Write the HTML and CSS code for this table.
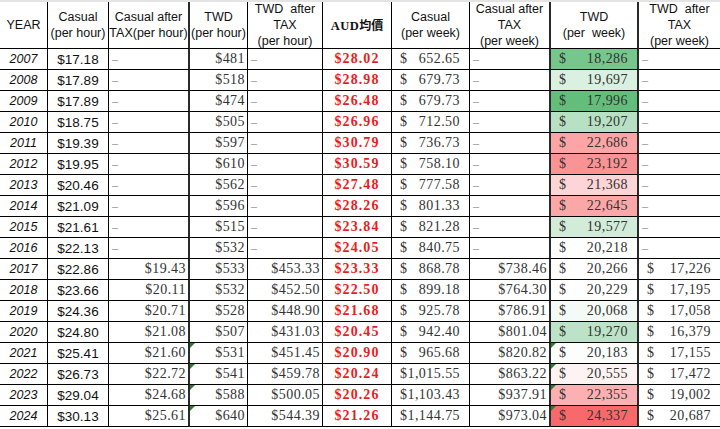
FILE: index.html
```html
<!DOCTYPE html>
<html lang="zh-Hant">
<head>
<meta charset="utf-8">
<title>Casual vs TWD</title>
<link rel="stylesheet" href="styles.css">
</head>
<body>
<div class="sheet">
  <div class="h">YEAR</div>
  <div class="h"><span>Casual</span><span>(per hour)</span></div>
  <div class="h"><span>Casual after</span><span>TAX(per hour)</span></div>
  <div class="h"><span>TWD</span><span>(per hour)</span></div>
  <div class="h"><span>TWD&nbsp; after</span><span>TAX</span><span>(per hour)</span></div>
  <div class="h aud-h"><span><b class="lat">AUD</b><b class="cjk">均價</b></span></div>
  <div class="h"><span>Casual</span><span>(per week)</span></div>
  <div class="h"><span>Casual after</span><span>TAX</span><span>(per week)</span></div>
  <div class="h"><span>TWD</span><span>(per&nbsp; week)</span></div>
  <div class="h"><span>TWD&nbsp; after</span><span>TAX</span><span>(per week)</span></div>

  <div class="yr">2007</div><div class="cas">$17.18</div><div class="dash">–</div><div class="num">$481</div><div class="dash">–</div><div class="aud">$28.02</div><div class="acc"><span>$</span><span>652.65</span></div><div class="dash">–</div><div class="acc" style="background:rgb(119,198,140)"><span>$</span><span>18,286</span></div><div class="dash">–</div>
  <div class="yr">2008</div><div class="cas">$17.89</div><div class="dash">–</div><div class="num">$518</div><div class="dash">–</div><div class="aud">$28.98</div><div class="acc"><span>$</span><span>679.73</span></div><div class="dash">–</div><div class="acc" style="background:rgb(218,240,224)"><span>$</span><span>19,697</span></div><div class="dash">–</div>
  <div class="yr">2009</div><div class="cas">$17.89</div><div class="dash">–</div><div class="num">$474</div><div class="dash">–</div><div class="aud">$26.48</div><div class="acc"><span>$</span><span>679.73</span></div><div class="dash">–</div><div class="acc" style="background:rgb(99,190,123)"><span>$</span><span>17,996</span></div><div class="dash">–</div>
  <div class="yr">2010</div><div class="cas">$18.75</div><div class="dash">–</div><div class="num">$505</div><div class="dash">–</div><div class="aud">$26.96</div><div class="acc"><span>$</span><span>712.50</span></div><div class="dash">–</div><div class="acc" style="background:rgb(184,225,195)"><span>$</span><span>19,207</span></div><div class="dash">–</div>
  <div class="yr">2011</div><div class="cas">$19.39</div><div class="dash">–</div><div class="num">$597</div><div class="dash">–</div><div class="aud">$30.79</div><div class="acc"><span>$</span><span>736.73</span></div><div class="dash">–</div><div class="acc" style="background:rgb(251,165,166)"><span>$</span><span>22,686</span></div><div class="dash">–</div>
  <div class="yr">2012</div><div class="cas">$19.95</div><div class="dash">–</div><div class="num">$610</div><div class="dash">–</div><div class="aud">$30.59</div><div class="acc"><span>$</span><span>758.10</span></div><div class="dash">–</div><div class="acc" style="background:rgb(250,147,148)"><span>$</span><span>23,192</span></div><div class="dash">–</div>
  <div class="yr">2013</div><div class="cas">$20.46</div><div class="dash">–</div><div class="num">$562</div><div class="dash">–</div><div class="aud">$27.48</div><div class="acc"><span>$</span><span>777.58</span></div><div class="dash">–</div><div class="acc" style="background:rgb(253,213,214)"><span>$</span><span>21,368</span></div><div class="dash">–</div>
  <div class="yr">2014</div><div class="cas">$21.09</div><div class="dash">–</div><div class="num">$596</div><div class="dash">–</div><div class="aud">$28.26</div><div class="acc"><span>$</span><span>801.33</span></div><div class="dash">–</div><div class="acc" style="background:rgb(251,167,168)"><span>$</span><span>22,645</span></div><div class="dash">–</div>
  <div class="yr">2015</div><div class="cas">$21.61</div><div class="dash">–</div><div class="num">$515</div><div class="dash">–</div><div class="aud">$23.84</div><div class="acc"><span>$</span><span>821.28</span></div><div class="dash">–</div><div class="acc" style="background:rgb(210,236,217)"><span>$</span><span>19,577</span></div><div class="dash">–</div>
  <div class="yr">2016</div><div class="cas">$22.13</div><div class="dash">–</div><div class="num">$532</div><div class="dash">–</div><div class="aud">$24.05</div><div class="acc"><span>$</span><span>840.75</span></div><div class="dash">–</div><div class="acc" style="background:rgb(254,255,255)"><span>$</span><span>20,218</span></div><div class="dash">–</div>
  <div class="yr">2017</div><div class="cas">$22.86</div><div class="num">$19.43</div><div class="num">$533</div><div class="num">$453.33</div><div class="aud">$23.33</div><div class="acc"><span>$</span><span>868.78</span></div><div class="num">$738.46</div><div class="acc" style="background:rgb(255,253,253)"><span>$</span><span>20,266</span></div><div class="acc"><span>$</span><span>17,226</span></div>
  <div class="yr">2018</div><div class="cas">$23.66</div><div class="num">$20.11</div><div class="num">$532</div><div class="num">$452.50</div><div class="aud">$22.50</div><div class="acc"><span>$</span><span>899.18</span></div><div class="num">$764.30</div><div class="acc" style="background:rgb(255,255,255)"><span>$</span><span>20,229</span></div><div class="acc"><span>$</span><span>17,195</span></div>
  <div class="yr">2019</div><div class="cas">$24.36</div><div class="num">$20.71</div><div class="num">$528</div><div class="num">$448.90</div><div class="aud">$21.68</div><div class="acc"><span>$</span><span>925.78</span></div><div class="num">$786.91</div><div class="acc" style="background:rgb(244,250,246)"><span>$</span><span>20,068</span></div><div class="acc"><span>$</span><span>17,058</span></div>
  <div class="yr">2020</div><div class="cas">$24.80</div><div class="num">$21.08</div><div class="num">$507</div><div class="num">$431.03</div><div class="aud">$20.45</div><div class="acc"><span>$</span><span>942.40</span></div><div class="num">$801.04</div><div class="acc" style="background:rgb(188,227,199)"><span>$</span><span>19,270</span></div><div class="acc"><span>$</span><span>16,379</span></div>
  <div class="yr">2021</div><div class="cas">$25.41</div><div class="num">$21.60</div><div class="num mark">$531</div><div class="num">$451.45</div><div class="aud">$20.90</div><div class="acc"><span>$</span><span>965.68</span></div><div class="num">$820.82</div><div class="acc mark" style="background:rgb(252,254,253)"><span>$</span><span>20,183</span></div><div class="acc"><span>$</span><span>17,155</span></div>
  <div class="yr">2022</div><div class="cas">$26.73</div><div class="num">$22.72</div><div class="num mark">$541</div><div class="num">$459.78</div><div class="aud">$20.24</div><div class="acc"><span>$1,015.55</span></div><div class="num">$863.22</div><div class="acc mark" style="background:rgb(254,243,243)"><span>$</span><span>20,555</span></div><div class="acc"><span>$</span><span>17,472</span></div>
  <div class="yr">2023</div><div class="cas">$29.04</div><div class="num">$24.68</div><div class="num mark">$588</div><div class="num">$500.05</div><div class="aud">$20.26</div><div class="acc"><span>$1,103.43</span></div><div class="num">$937.91</div><div class="acc mark" style="background:rgb(251,177,178)"><span>$</span><span>22,355</span></div><div class="acc"><span>$</span><span>19,002</span></div>
  <div class="yr">2024</div><div class="cas">$30.13</div><div class="num">$25.61</div><div class="num mark">$640</div><div class="num">$544.39</div><div class="aud">$21.26</div><div class="acc"><span>$1,144.75</span></div><div class="num">$973.04</div><div class="acc mark" style="background:rgb(248,105,107)"><span>$</span><span>24,337</span></div><div class="acc"><span>$</span><span>20,687</span></div>
</div>
</body>
</html>
```
FILE: styles.css
```css
html, body {
  margin: 0;
  padding: 0;
  background: #ffffff;
}

.sheet {
  display: grid;
  grid-template-columns: 48px 61px 81px 58px 75px 69px 78px 81px 88px 81px;
  grid-template-rows: 47px repeat(18, 21px);
  width: 720px;
  border-top: 2px solid #e4e4e4;
  color: #222;
}

.sheet > div {
  box-sizing: border-box;
  position: relative;
  display: flex;
  align-items: center;
  min-width: 0;
  overflow: hidden;
  white-space: nowrap;
  border-right: 1px solid #000;
  border-bottom: 1px solid #000;
}

.sheet > div:nth-child(10n+3),
.sheet > div:nth-child(10n+8),
.sheet > div:nth-child(10n+9) {
  border-right: 2px solid #2a2a2a;
}

.sheet > div:nth-child(10n) {
  border-right: none;
}

.sheet .h {
  flex-direction: column;
  justify-content: center;
  font: 12.5px/16px "Liberation Sans", Arial, sans-serif;
  color: #111;
  text-align: center;
}

.aud-h .lat {
  font: bold 12.5px "Liberation Serif", serif;
  letter-spacing: 0.5px;
}

.aud-h .cjk {
  font: bold 12px "Noto Sans CJK TC", "Noto Sans CJK SC", sans-serif;
}

.sheet .yr {
  justify-content: center;
  font: italic 12.5px "Liberation Sans", Arial, sans-serif;
  color: #111;
}

.sheet .cas {
  justify-content: center;
  font: 13.5px "Liberation Sans", Arial, sans-serif;
  color: #111;
}

.sheet .num {
  justify-content: flex-end;
  padding-right: 2px;
  font: 14px "Liberation Serif", serif;
  letter-spacing: 0.45px;
  color: #333;
}

.sheet .dash {
  justify-content: flex-start;
  padding-left: 3px;
  font: 12px "Liberation Serif", serif;
  color: #8a8a8a;
}

.sheet .aud {
  justify-content: center;
  font: bold 14px "Liberation Serif", serif;
  letter-spacing: 1.1px;
  color: #ec1c1c;
}

.sheet .acc {
  justify-content: space-between;
  padding: 0 9px 0 8px;
  font: 14px "Liberation Serif", serif;
  letter-spacing: 0.45px;
  color: #333;
}

.mark::before {
  content: "";
  position: absolute;
  left: 0;
  top: 0;
  border-top: 5px solid #2d7d2d;
  border-right: 5px solid transparent;
}
```
